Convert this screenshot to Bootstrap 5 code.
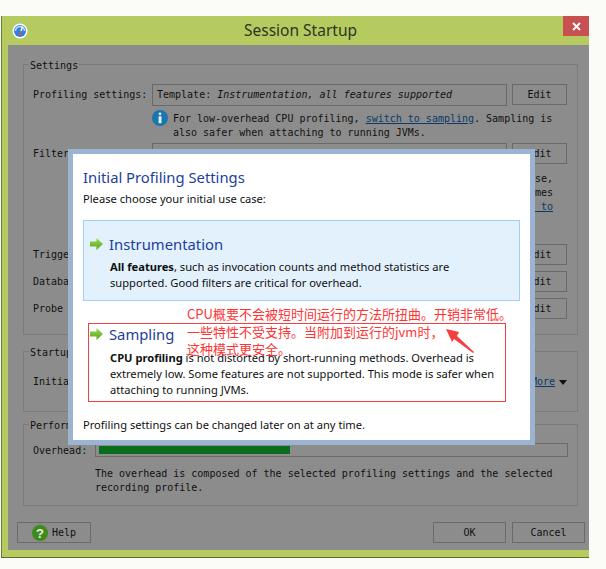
<!DOCTYPE html>
<html lang="en">
<head>
<meta charset="UTF-8">
<title>Session Startup</title>
<link href="https://cdn.jsdelivr.net/npm/bootstrap@5.3.2/dist/css/bootstrap.min.css" rel="stylesheet">
<script src="https://cdn.jsdelivr.net/npm/bootstrap@5.3.2/dist/js/bootstrap.bundle.min.js"></script>
<style>
    html, body { height: 569px; overflow: hidden; }
    body { background: #fbfbf8; position: relative; font-family: "DejaVu Sans Mono", "Liberation Mono", monospace; font-size: 10px; color: #111; line-height: 14px; }
    .win { margin: 16px 0 0 1px; width: 588px; height: 542px; background: #b5cb5f; border-left: 1px solid #6c7a3a; border-bottom: 1px solid #5d6a30; }
    .win-title { height: 29px; padding: 0 0 0 10px; }
    .win-name { font-family: "Noto Sans", sans-serif; font-size: 15.5px; color: #2f3524; line-height: 29px; margin-left: 216px; }
    .win-close { width: 26px; height: 20px; background: #c75050; margin-left: auto; align-self: flex-start; }
    .client { margin-left: 6px; height: 505px; background: #8c8c8c; padding: 19px 11px 0 15px; }
    .grp { border: 1px solid #7b7b7b; position: relative; padding-left: 9px; padding-right: 10px; }
    .grp-title { position: absolute; top: -5px; left: 5px; background: #8c8c8c; padding: 0 1px; line-height: 12px; }
    .grp-a { height: 271px; padding-top: 19px; }
    .grp-b { height: 61px; margin-top: 16px; padding-top: 23px; }
    .grp-c { height: 82px; margin-top: 12px; padding-top: 18px; }
    .field-row { height: 21px; }
    .field-label { width: 119px; flex: none; white-space: nowrap; }
    .field-box { width: 355px; height: 22px; flex: none; border: 1px solid #696969; margin-right: 5px; padding: 0 4px; line-height: 19px; white-space: nowrap; overflow: hidden; }
    .edit-btn, .foot-btn { border: 1px solid #6a6a6a; border-radius: 0; background: #8c8c8c; color: #111; font: inherit; padding: 0; height: 21px; line-height: 18px; }
    .edit-btn { width: 55px; }
    .foot-btn { width: 73px; }
    .ok-btn { margin-right: 6px; }
    .note { margin-left: 119px; height: 38px; }
    .note-text { line-height: 14px; padding-top: 7px; }
    .info-ico { margin-right: 5px; margin-top: 5px; flex: none; }
    .note-b { margin-left: 140px; width: 380px; margin-top: 8px; height: 59px; }
    .row-trigger { margin-top: 13px; }
    .row-next { margin-top: 6px; }
    a.dim-link { color: #0b3a66; }
    .more-tri { width: 0; height: 0; border-left: 4px solid transparent; border-right: 4px solid transparent; border-top: 5px solid #111; margin-left: 4px; }
    .bar-box { margin-left: 62px; height: 14px; width: 473px; border: 1px solid #6a6a6a; padding: 2px 3px; }
    .bar-fill { height: 8px; background: #0a6d1c; }
    .bar-label { position: absolute; left: 9px; top: 19px; }
    .bar-note { margin: 10px 0 0 62px; }
    .foot { margin: 16px -7px 0 -6px; }
    .help-btn { width: 74px; }
    .help-btn span { margin-left: 4px; }

    .init-dlg { position: absolute; left: 68px; top: 149px; width: 467px; height: 296px; border: 5px solid #9ab4d2; background: #fff; padding: 14px 10px 0; font-family: "Noto Sans", sans-serif; font-size: 11.15px; line-height: 16px; color: #101010; }
    .init-head { font-size: 14.8px; line-height: 19px; color: #1c3f9c; }
    .init-sub { margin-top: 4px; }
    .opt-blue { margin-top: 13px; width: 437px; height: 81px; background: #e3f1fd; border: 1px solid #9ad0fb; padding: 13px 6px 0 6px; }
    .opt-red { margin: 22px 0 0 5px; width: 418px; height: 79px; border: 1px solid #f33f3f; padding: 0 1px; }
    .opt-name { font-size: 14.8px; line-height: 20px; color: #1c3f9c; margin-left: 6px; }
    .opt-text { margin: 5px 0 0 20px; white-space: nowrap; }
    .opt-red .opt-text { margin-top: 6px; }
    .init-foot { margin-top: 15px; }
    .red-note { position: absolute; left: 114px; top: 151px; width: 330px; font-family: "Noto Sans CJK SC", sans-serif; font-size: 13px; line-height: 17px; color: #f33; white-space: nowrap; }
    .red-note-rest { display: block; margin-top: 1px; }
    .red-arrow { position: absolute; left: 372px; top: 174px; }
</style>
</head>
<body>

<div class="win">
    <div class="win-title d-flex align-items-center">
        <svg width="16" height="16" viewBox="0 0 16 16"><circle cx="8" cy="8" r="7.5" fill="#fff"/><circle cx="8" cy="8" r="6" fill="#2a7fe8"/><path d="M3.5 8a4.5 4.5 0 0 1 9 0" fill="none" stroke="#cfe3fb" stroke-width="1.4"/><path d="M10.5 3.5 9 8" stroke="#fff" stroke-width="1.6"/><path d="M9 8 7.5 12.5" stroke="#e0552f" stroke-width="1.8"/></svg>
        <span class="win-name">Session Startup</span>
        <div class="win-close d-flex align-items-center justify-content-center">
            <svg width="9" height="9" viewBox="0 0 9 9"><path d="M1 1l7 7M8 1 1 8" stroke="#fff" stroke-width="1.8"/></svg>
        </div>
    </div>
    <div class="client">
        <div class="grp grp-a">
            <span class="grp-title">Settings</span>
            <div class="field-row d-flex align-items-center">
                <span class="field-label">Profiling settings:</span>
                <div class="field-box">Template: <i>Instrumentation, all features supported</i></div>
                <button class="btn edit-btn">Edit</button>
            </div>
            <div class="note d-flex align-items-start">
                <svg class="info-ico" width="16" height="16" viewBox="0 0 16 16"><circle cx="8" cy="8" r="8" fill="#1b76ac"/><circle cx="8" cy="3.8" r="1.4" fill="#dfeef7"/><rect x="6.6" y="6.2" width="2.9" height="7" fill="#dfeef7"/></svg>
                <div class="note-text">For low-overhead CPU profiling, <a class="dim-link" href="#">switch to sampling</a>. Sampling is<br>also safer when attaching to running JVMs.</div>
            </div>
            <div class="field-row d-flex align-items-center">
                <span class="field-label">Filter settings:</span>
                <div class="field-box">&nbsp;&nbsp;Filters apply to all profiled classes</div>
                <button class="btn edit-btn">Edit</button>
            </div>
            <div class="note-b text-end">Profiling with all classes may add overhead in this case,<br>short-running methods are measured many times<br><a class="dim-link" href="#">switch to</a></div>
            <div class="field-row row-trigger d-flex align-items-center">
                <span class="field-label">Trigger settings:</span>
                <div class="field-box"></div>
                <button class="btn edit-btn">Edit</button>
            </div>
            <div class="field-row row-next d-flex align-items-center">
                <span class="field-label">Database settings:</span>
                <div class="field-box"></div>
                <button class="btn edit-btn">Edit</button>
            </div>
            <div class="field-row row-next d-flex align-items-center">
                <span class="field-label">Probe settings:</span>
                <div class="field-box"></div>
                <button class="btn edit-btn">Edit</button>
            </div>
        </div>
        <div class="grp grp-b">
            <span class="grp-title">Startup</span>
            <div class="d-flex align-items-center">
                <span class="field-label">Initial recording:</span>
                <a class="dim-link ms-auto" href="#">More</a>
                <span class="more-tri"></span>
            </div>
        </div>
        <div class="grp grp-c">
            <span class="grp-title">Performance</span>
            <span class="bar-label">Overhead:</span>
            <div class="bar-box"><div class="bar-fill" style="width: 41%"></div></div>
            <div class="bar-note">The overhead is composed of the selected profiling settings and the selected<br>recording profile.</div>
        </div>
        <div class="foot d-flex">
            <button class="btn foot-btn help-btn d-flex align-items-center justify-content-center">
                <svg width="16" height="16" viewBox="0 0 16 16"><circle cx="8" cy="8" r="8" fill="#3f8a1c"/><text x="8" y="12.5" text-anchor="middle" font-family="Liberation Sans, sans-serif" font-size="13" font-weight="700" fill="#e8f3df">?</text></svg>
                <span>Help</span>
            </button>
            <button class="btn foot-btn ok-btn ms-auto">OK</button>
            <button class="btn foot-btn">Cancel</button>
        </div>
    </div>
</div>

<div class="init-dlg">
    <div class="init-head">Initial Profiling Settings</div>
    <div class="init-sub">Please choose your initial use case:</div>
    <div class="opt-blue">
        <div class="d-flex align-items-center">
            <svg width="13" height="12" viewBox="0 0 13 12"><defs><linearGradient id="arrowA" x1="0" y1="0" x2="0" y2="1"><stop offset="0" stop-color="#9bd94f"/><stop offset="1" stop-color="#58a51c"/></linearGradient></defs><path d="M0 3.5h6.5V0L13 6l-6.5 6V8.5H0z" fill="url(#arrowA)"/></svg>
            <span class="opt-name">Instrumentation</span>
        </div>
        <div class="opt-text"><b>All features</b>, such as invocation counts and method statistics are<br>supported. Good filters are critical for overhead.</div>
    </div>
    <div class="opt-red">
        <div class="d-flex align-items-center">
            <svg width="13" height="12" viewBox="0 0 13 12"><defs><linearGradient id="arrowB" x1="0" y1="0" x2="0" y2="1"><stop offset="0" stop-color="#9bd94f"/><stop offset="1" stop-color="#58a51c"/></linearGradient></defs><path d="M0 3.5h6.5V0L13 6l-6.5 6V8.5H0z" fill="url(#arrowB)"/></svg>
            <span class="opt-name">Sampling</span>
        </div>
        <div class="opt-text"><b>CPU profiling</b> is not distorted by short-running methods. Overhead is<br>extremely low. Some features are not supported. This mode is safer when<br>attaching to running JVMs.</div>
    </div>
    <div class="init-foot">Profiling settings can be changed later on at any time.</div>
    <div class="red-note">CPU概要不会被短时间运行的方法所扭曲。开销非常低。<span class="red-note-rest">一些特性不受支持。当附加到运行的jvm时，<br>这种模式更安全。</span></div>
    <svg class="red-arrow" width="30" height="26" viewBox="0 0 30 26"><path d="M1 1 14 4 12 8 29 24 28 25 9 11 7 14z" fill="#f33f3f"/></svg>
</div>

</body>
</html>
